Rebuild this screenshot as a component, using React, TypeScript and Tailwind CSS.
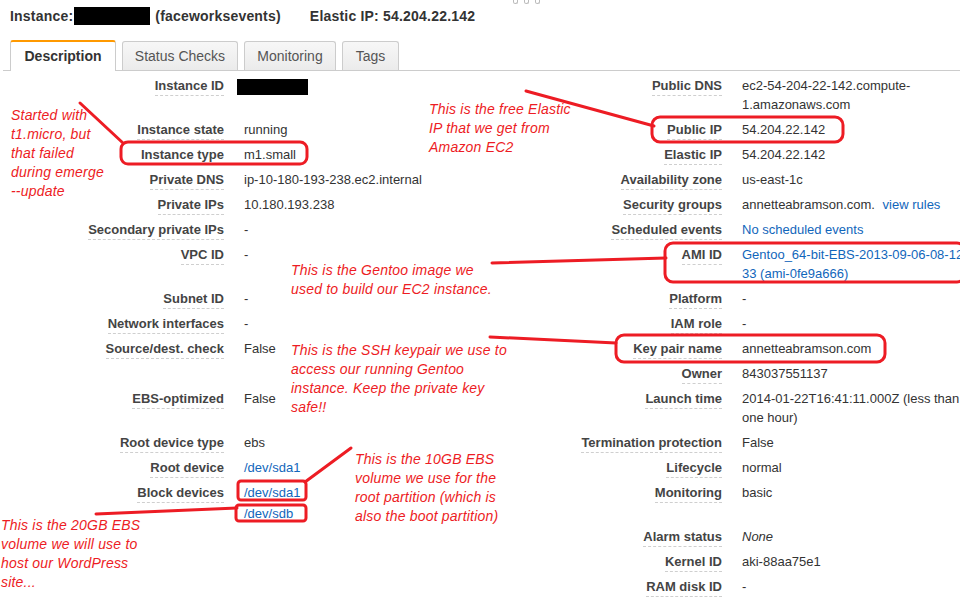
import type { ReactNode } from 'react';

type Row = {
  h: string;
  leftLabel?: string;
  leftValue?: ReactNode;
  rightLabel?: string;
  rightValue?: ReactNode;
};

const Link = ({ children }: { children: ReactNode }) => (
  <span className="text-[#1166bb]">{children}</span>
);

const Redacted = () => <span className="inline-block w-[71px] h-[16px] -ml-[7px] bg-black align-middle" />;

const ROWS: Row[] = [
  {
    h: 'h-[44px]',
    leftLabel: 'Instance ID',
    leftValue: <Redacted />,
    rightLabel: 'Public DNS',
    rightValue: (
      <>
        ec2-54-204-22-142.compute-
        <br />
        1.amazonaws.com
      </>
    ),
  },
  { h: 'h-[25px]', leftLabel: 'Instance state', leftValue: 'running', rightLabel: 'Public IP', rightValue: '54.204.22.142' },
  { h: 'h-[25px]', leftLabel: 'Instance type', leftValue: 'm1.small', rightLabel: 'Elastic IP', rightValue: '54.204.22.142' },
  { h: 'h-[25px]', leftLabel: 'Private DNS', leftValue: 'ip-10-180-193-238.ec2.internal', rightLabel: 'Availability zone', rightValue: 'us-east-1c' },
  {
    h: 'h-[25px]',
    leftLabel: 'Private IPs',
    leftValue: '10.180.193.238',
    rightLabel: 'Security groups',
    rightValue: (
      <>
        annetteabramson.com. <span className="ml-[4px]"><Link>view rules</Link></span>
      </>
    ),
  },
  {
    h: 'h-[25px]',
    leftLabel: 'Secondary private IPs',
    leftValue: '-',
    rightLabel: 'Scheduled events',
    rightValue: <Link>No scheduled events</Link>,
  },
  {
    h: 'h-[44px]',
    leftLabel: 'VPC ID',
    leftValue: '-',
    rightLabel: 'AMI ID',
    rightValue: (
      <Link>
        Gentoo_64-bit-EBS-2013-09-06-08-12
        <br />
        33 (ami-0fe9a666)
      </Link>
    ),
  },
  { h: 'h-[25px]', leftLabel: 'Subnet ID', leftValue: '-', rightLabel: 'Platform', rightValue: '-' },
  { h: 'h-[25px]', leftLabel: 'Network interfaces', leftValue: '-', rightLabel: 'IAM role', rightValue: '-' },
  { h: 'h-[25px]', leftLabel: 'Source/dest. check', leftValue: 'False', rightLabel: 'Key pair name', rightValue: 'annetteabramson.com' },
  { h: 'h-[25px]', rightLabel: 'Owner', rightValue: '843037551137' },
  {
    h: 'h-[44px]',
    leftLabel: 'EBS-optimized',
    leftValue: 'False',
    rightLabel: 'Launch time',
    rightValue: (
      <>
        2014-01-22T16:41:11.000Z (less than
        <br />
        one hour)
      </>
    ),
  },
  { h: 'h-[25px]', leftLabel: 'Root device type', leftValue: 'ebs', rightLabel: 'Termination protection', rightValue: 'False' },
  { h: 'h-[25px]', leftLabel: 'Root device', leftValue: <Link>/dev/sda1</Link>, rightLabel: 'Lifecycle', rightValue: 'normal' },
  {
    h: 'h-[44px]',
    leftLabel: 'Block devices',
    leftValue: (
      <div className="flex flex-col">
        <Link>/dev/sda1</Link>
        <span className="mt-[2px]">
          <Link>/dev/sdb</Link>
        </span>
      </div>
    ),
    rightLabel: 'Monitoring',
    rightValue: 'basic',
  },
  { h: 'h-[25px]', rightLabel: 'Alarm status', rightValue: <span className="italic">None</span> },
  { h: 'h-[25px]', rightLabel: 'Kernel ID', rightValue: 'aki-88aa75e1' },
  { h: 'h-[25px]', rightLabel: 'RAM disk ID', rightValue: '-' },
];

const Label = ({ text }: { text?: string }) =>
  text ? (
    <span className="inline-block font-bold text-[#444] border-b border-dashed border-[#cfcfcf]">{text}</span>
  ) : null;

const Note = ({ className, lines }: { className: string; lines: string[] }) => (
  <div
    className={`absolute italic text-[14px] leading-[19px] tracking-[0.2px] text-[#ed1c24] whitespace-nowrap ${className}`}
    style={{ fontFamily: '"Liberation Sans", Arial, sans-serif' }}
  >
    {lines.map((l) => (
      <div key={l}>{l}</div>
    ))}
  </div>
);

const App = () => {
  return (
    <div
      className="relative w-[960px] h-[598px] overflow-hidden bg-white text-[13px] text-[#333]"
      style={{ fontFamily: '"Liberation Sans", Arial, sans-serif' }}
    >
      {/* splitter handle */}
      <div className="absolute top-0 left-[513px] flex gap-[6px]">
        <span className="w-[5px] h-[4px] rounded-b-full border border-t-0 border-[#bbb]" />
        <span className="w-[5px] h-[4px] rounded-b-full border border-t-0 border-[#bbb]" />
        <span className="w-[5px] h-[4px] rounded-b-full border border-t-0 border-[#bbb]" />
      </div>

      {/* Header */}
      <div className="flex items-center h-[32px] pl-[10px] font-bold text-[14px] tracking-[0.2px] text-[#333]">
        <span>Instance:</span>
        <span className="inline-block w-[76px] h-[18px] bg-black ml-[1px]" />
        <span className="ml-[5px]">(faceworksevents)</span>
        <span className="ml-[29px]">Elastic IP: 54.204.22.142</span>
      </div>

      {/* Tabs */}
      <div className="mt-[8px] ml-[3px] flex items-end gap-[6px] h-[31px] pl-[7px] border-b border-[#ccc] text-[14px]">
        <div className="h-[31px] -mb-px w-[106px] flex items-center justify-center bg-white border-t-2 border-t-[#f90] border-x border-[#ccc] rounded-t-[3px] font-bold text-[#333]">
          Description
        </div>
        <div className="h-[29px] w-[116px] flex items-center justify-center bg-gradient-to-b from-[#f7f7f7] to-[#ebebeb] border border-b-0 border-[#ccc] rounded-t-[3px] text-[#555]">
          Status Checks
        </div>
        <div className="h-[29px] w-[92px] flex items-center justify-center bg-gradient-to-b from-[#f7f7f7] to-[#ebebeb] border border-b-0 border-[#ccc] rounded-t-[3px] text-[#555]">
          Monitoring
        </div>
        <div className="h-[29px] w-[57px] flex items-center justify-center bg-gradient-to-b from-[#f7f7f7] to-[#ebebeb] border border-b-0 border-[#ccc] rounded-t-[3px] text-[#555]">
          Tags
        </div>
      </div>

      {/* Details table */}
      <div className="pt-[2px] leading-[19px]">
        {ROWS.map((r, i) => (
          <div key={i} className={`flex items-start pt-[3px] ${r.h}`}>
            <div className="w-[224px] text-right">
              <Label text={r.leftLabel} />
            </div>
            <div className="w-[250px] ml-[20px]">{r.leftValue}</div>
            <div className="w-[228px] text-right">
              <Label text={r.rightLabel} />
            </div>
            <div className="w-[218px] ml-[20px] whitespace-nowrap">{r.rightValue}</div>
          </div>
        ))}
      </div>

      {/* Red annotations */}
      <svg className="absolute inset-0 pointer-events-none" width="960" height="598" viewBox="0 0 960 598">
        <g fill="none" stroke="#ed1c24" strokeWidth="3" strokeLinecap="round">
          <line x1="80" y1="103" x2="123" y2="143" />
          <rect x="121" y="142" width="186" height="22" rx="7" />
          <line x1="526" y1="91" x2="654" y2="126" />
          <rect x="652" y="117" width="191" height="25" rx="8" />
          <line x1="492" y1="263" x2="666" y2="258" />
          <rect x="665" y="243" width="300" height="39" rx="8" />
          <line x1="490" y1="337" x2="616" y2="343" />
          <rect x="616" y="335" width="269" height="27" rx="8" />
          <line x1="305" y1="482" x2="351" y2="448" />
          <rect x="238" y="481" width="68" height="19" rx="3" />
          <line x1="96" y1="514" x2="237" y2="508" />
          <rect x="236" y="505" width="70" height="16" rx="3" />
        </g>
      </svg>

      <Note className="left-[11px] top-[106px]" lines={['Started with', 't1.micro, but', 'that failed', 'during emerge', '--update']} />
      <Note className="left-[429px] top-[100px]" lines={['This is the free Elastic', 'IP that we get from', 'Amazon EC2']} />
      <Note className="left-[291px] top-[261px]" lines={['This is the Gentoo image we', 'used to build our EC2 instance.']} />
      <Note
        className="left-[291px] top-[341px]"
        lines={['This is the SSH keypair we use to', 'access our running Gentoo', 'instance. Keep the private key', 'safe!!']}
      />
      <Note
        className="left-[355px] top-[450px]"
        lines={['This is the 10GB EBS', 'volume we use for the', 'root partition (which is', 'also the boot partition)']}
      />
      <Note className="left-[1px] top-[516px]" lines={['This is the 20GB EBS', 'volume we will use to', 'host our WordPress', 'site...']} />
    </div>
  );
};

export default App;
